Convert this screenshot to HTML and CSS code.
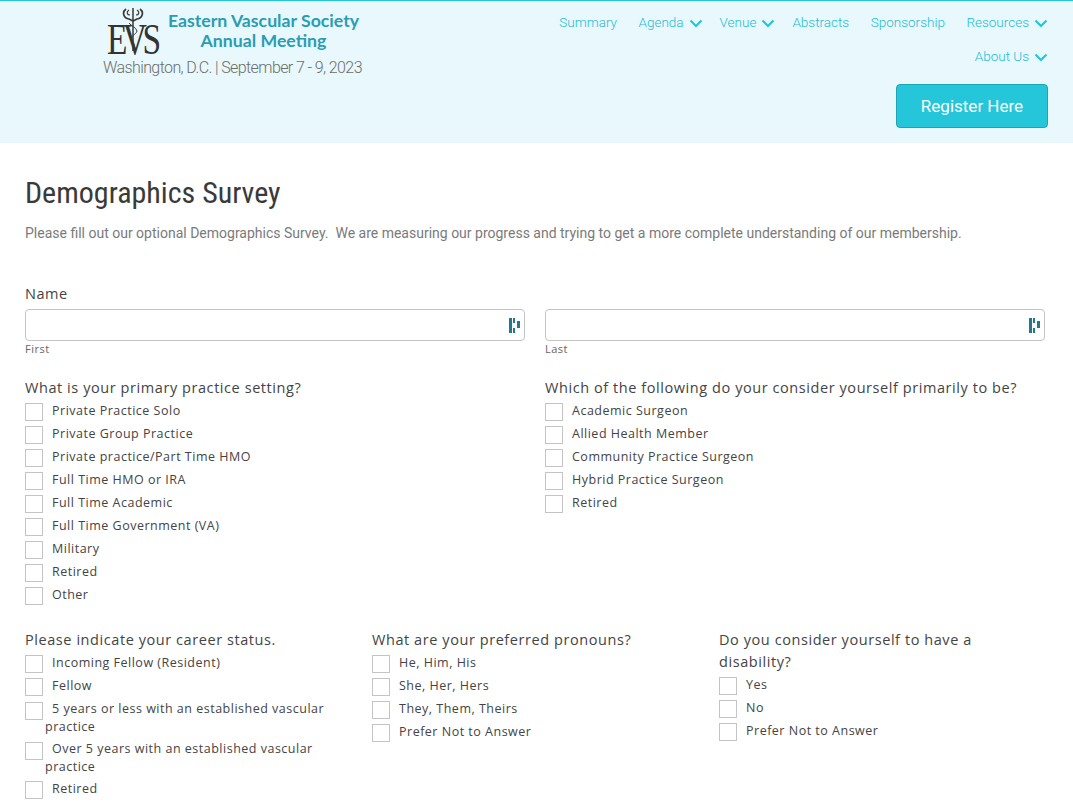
FILE: index.html
```html
<!DOCTYPE html>
<html lang="en">
<head>
<meta charset="utf-8">
<title>Demographics Survey</title>
<link rel="stylesheet" href="styles.css">
</head>
<body>
<header class="site-header">
  <div class="brand">
    <div class="brand-top">
      <div class="logo">
        <span class="logo-text">EVS</span>
        <svg class="logo-staff" width="24" height="46" viewBox="0 0 24 46" aria-hidden="true">
          <path d="M11 1V44" stroke="#3a3a3a" stroke-width="1.5" fill="none"/>
          <path d="M4 2C0 5 1 11 7 12L11 14L15 12C21 11 22 5 18 2" stroke="#3a3a3a" stroke-width="1.7" fill="none"/>
          <path d="M7 3C4 5 5 8 8 8M15 3C18 5 17 8 14 8" stroke="#3a3a3a" stroke-width="1.2" fill="none"/>
          <path d="M7 16C9 19 14 20 15 24C14 28 9 28 9 32C10 35 13 36 12 40" stroke="#3a3a3a" stroke-width="1" fill="none"/>
        </svg>
      </div>
      <div class="brand-title">Eastern Vascular Society<br>Annual Meeting</div>
    </div>
    <div class="brand-sub">Washington, D.C. | September 7 - 9, 2023</div>
  </div>
  <div class="header-right">
    <nav class="nav">
      <a class="nav-link">Summary</a>
      <a class="nav-link">Agenda<svg class="chev" viewBox="0 0 14 9"><path d="M1.5 1.5L7 7L12.5 1.5" /></svg></a>
      <a class="nav-link tight">Venue<svg class="chev" viewBox="0 0 14 9"><path d="M1.5 1.5L7 7L12.5 1.5" /></svg></a>
      <a class="nav-link tight">Abstracts</a>
      <a class="nav-link">Sponsorship</a>
      <a class="nav-link">Resources<svg class="chev" viewBox="0 0 14 9"><path d="M1.5 1.5L7 7L12.5 1.5" /></svg></a>
      <a class="nav-link">About Us<svg class="chev" viewBox="0 0 14 9"><path d="M1.5 1.5L7 7L12.5 1.5" /></svg></a>
    </nav>
    <a class="register">Register Here</a>
  </div>
</header>
<main class="content">
  <h1 class="title">Demographics Survey</h1>
  <p class="intro">Please fill out our optional Demographics Survey.&nbsp; We are measuring our progress and trying to get a more complete understanding of our membership.</p>

  <div class="field name-field">
    <div class="label">Name</div>
    <div class="two-col">
      <div>
        <div class="input"><svg class="pw" viewBox="0 0 11 15"><path d="M0 0h3v15H0zM4 0h2v5H4zM4 10h2v5H4zM8 3h3v7H8z"/></svg></div>
        <div class="sub">First</div>
      </div>
      <div>
        <div class="input"><svg class="pw" viewBox="0 0 11 15"><path d="M0 0h3v15H0zM4 0h2v5H4zM4 10h2v5H4zM8 3h3v7H8z"/></svg></div>
        <div class="sub">Last</div>
      </div>
    </div>
  </div>

  <div class="two-col q-row-1">
    <div>
      <div class="label">What is your primary practice setting?</div>
      <div class="opt"><i class="box"></i><span>Private Practice Solo</span></div>
      <div class="opt"><i class="box"></i><span>Private Group Practice</span></div>
      <div class="opt"><i class="box"></i><span>Private practice/Part Time HMO</span></div>
      <div class="opt"><i class="box"></i><span>Full Time HMO or IRA</span></div>
      <div class="opt"><i class="box"></i><span>Full Time Academic</span></div>
      <div class="opt"><i class="box"></i><span>Full Time Government (VA)</span></div>
      <div class="opt"><i class="box"></i><span>Military</span></div>
      <div class="opt"><i class="box"></i><span>Retired</span></div>
      <div class="opt"><i class="box"></i><span>Other</span></div>
    </div>
    <div>
      <div class="label">Which of the following do your consider yourself primarily to be?</div>
      <div class="opt"><i class="box"></i><span>Academic Surgeon</span></div>
      <div class="opt"><i class="box"></i><span>Allied Health Member</span></div>
      <div class="opt"><i class="box"></i><span>Community Practice Surgeon</span></div>
      <div class="opt"><i class="box"></i><span>Hybrid Practice Surgeon</span></div>
      <div class="opt"><i class="box"></i><span>Retired</span></div>
    </div>
  </div>

  <div class="three-col">
    <div>
      <div class="label">Please indicate your career status.</div>
      <div class="opt"><i class="box"></i><span>Incoming Fellow (Resident)</span></div>
      <div class="opt"><i class="box"></i><span>Fellow</span></div>
      <div class="opt wrap"><i class="box"></i><span>5 years or less with an established vascular practice</span></div>
      <div class="opt wrap"><i class="box"></i><span>Over 5 years with an established vascular practice</span></div>
      <div class="opt"><i class="box"></i><span>Retired</span></div>
    </div>
    <div>
      <div class="label">What are your preferred pronouns?</div>
      <div class="opt"><i class="box"></i><span>He, Him, His</span></div>
      <div class="opt"><i class="box"></i><span>She, Her, Hers</span></div>
      <div class="opt"><i class="box"></i><span>They, Them, Theirs</span></div>
      <div class="opt"><i class="box"></i><span>Prefer Not to Answer</span></div>
    </div>
    <div>
      <div class="label">Do you consider yourself to have a disability?</div>
      <div class="opt"><i class="box"></i><span>Yes</span></div>
      <div class="opt"><i class="box"></i><span>No</span></div>
      <div class="opt"><i class="box"></i><span>Prefer Not to Answer</span></div>
    </div>
  </div>
</main>
</body>
</html>
```
FILE: styles.css
```css
* { box-sizing: border-box; }
html, body { margin: 0; padding: 0; height: 807px; overflow: hidden; }
body { background: #fff; font-family: "Open Sans", sans-serif; color: #444; }

.site-header {
  height: 143px;
  background: #e8f8fc;
  border-top: 1px solid #25c6da;
  display: flex;
  justify-content: space-between;
  padding: 0 25px 0 103px;
}
.brand { width: 262px; padding-top: 3px; }
.brand-top { display: flex; }
.logo { position: relative; width: 57px; height: 51px; margin-left: 4px; flex: none; }
.logo-staff { position: absolute; left: 15px; top: 3px; }
.logo-text {
  position: absolute; left: 0; top: 20px;
  font: 44px/32px "Liberation Serif", serif;
  letter-spacing: -6px;
  color: #333;
  transform: scaleX(0.76);
  transform-origin: left top;
}
.brand-title {
  margin-left: 3px; margin-top: 7px;
  width: 193px;
  text-align: center;
  font: 700 17.7px/20px Lato, sans-serif;
  color: #2a9db4;
}
.brand-sub {
  margin-top: 3px;
  font: 300 16px/20px Roboto, sans-serif;
  letter-spacing: -0.6px;
  color: #6d6d6d;
  white-space: nowrap;
}

.header-right { display: flex; flex-direction: column; align-items: flex-end; width: 520px; padding-top: 4px; }
.nav { display: flex; flex-wrap: wrap; justify-content: flex-end; width: 520px; }
.nav-link {
  height: 34px;
  margin-left: 21.5px;
  display: flex; align-items: center;
  font: 300 13.5px/34px Roboto, sans-serif;
  color: #25bcd4;
  white-space: nowrap;
}
.nav-link.tight { margin-left: 17px; }
.chev { width: 14px; height: 9px; margin-left: 5px; margin-top: 2px; }
.chev path { fill: none; stroke: #25c6da; stroke-width: 2.2; }
.register {
  margin-top: 11px;
  width: 152px; height: 44px;
  display: flex; align-items: center; justify-content: center;
  background: #25c6da;
  border: 1px solid #1ba5b8;
  border-radius: 4px;
  color: #fff;
  font: 400 17px/20px Roboto, sans-serif;
}

.content { padding: 0 28px 0 25px; }
.title {
  margin: 31px 0 0;
  font: 400 30px/38px Roboto, sans-serif;
  font-stretch: 75%;
  letter-spacing: 0;
  color: #3a3a3a;
}
.intro {
  margin: 11px 0 0;
  font: 400 14px/20px Roboto, sans-serif;
  color: #7a7a7a;
}
.label {
  font-size: 14.5px; line-height: 22px;
  letter-spacing: 0.57px;
  color: #444;
}
.name-field { margin-top: 40px; }
.name-field .label { margin-bottom: 4px; }
.two-col { display: grid; grid-template-columns: 500px 500px; column-gap: 20px; }
.input {
  height: 32px;
  border: 1px solid #c4c4c4;
  border-radius: 4px;
  background: #fff;
  display: flex; align-items: center; justify-content: flex-end;
  padding-right: 4px;
}
.pw { width: 11px; height: 15px; fill: #1f7a8c; }
.sub {
  font-size: 11px; line-height: 16px;
  letter-spacing: 0.5px;
  color: #666;
}
.q-row-1 { margin-top: 20px; }
.opt {
  display: flex;
  min-height: 23px;
  font-size: 12.5px; line-height: 18px;
  letter-spacing: 0.5px;
  color: #444;
  position: relative;
  padding-left: 27px;
  align-items: center;
}
.box {
  position: absolute; left: 0; top: 4px;
  width: 18px; height: 18px;
  background: #fff;
  border: 1px solid #c4c4c4;
}
.opt.wrap { padding-left: 20px; display: block; padding-top: 3px; padding-bottom: 1px; }
.opt.wrap .box { top: 5px; }
.opt.wrap span { display: block; text-indent: 7px; }
.three-col {
  margin-top: 23px;
  display: grid;
  grid-template-columns: 327px 327px 327px;
  column-gap: 20px;
}
```
